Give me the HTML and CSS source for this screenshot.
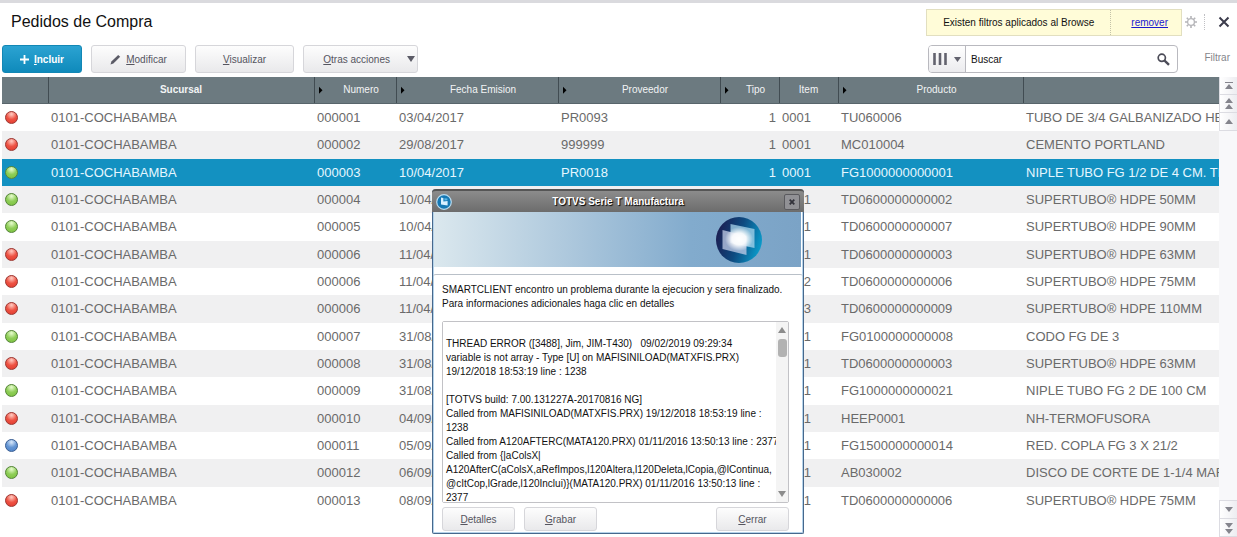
FILE: index.html
```html
<!DOCTYPE html>
<html lang="es">
<head>
    <meta charset="UTF-8">
    <meta name="viewport" content="width=device-width, initial-scale=1.0">
    <title>Pedidos de Compra</title>
    <link rel="stylesheet" href="styles.css">
</head>
<body>

<header class="title-bar">
    <h1>Pedidos de Compra</h1>
    <div class="filter-notice">
        <span class="notice-text">Existen filtros aplicados al Browse</span>
        <a class="notice-link" href="#">remover</a>
    </div>
    <button class="icon-btn gear" aria-label="Configurar">
        <svg width="12" height="12" viewBox="0 0 12 12"><circle cx="6" cy="6" r="3.4" fill="none" stroke="#b4b4b8" stroke-width="1.3"/><path d="M6 0V2M6 10V12M0 6H2M10 6H12M1.8 1.8 3.2 3.2M8.8 8.8 10.2 10.2M10.2 1.8 8.8 3.2M3.2 8.8 1.8 10.2" stroke="#b4b4b8" stroke-width="1.6"/></svg>
    </button>
    <button class="icon-btn close" aria-label="Cerrar ventana">
        <svg width="12" height="12" viewBox="0 0 12 12"><path d="M1.5 1.5 10.5 10.5M10.5 1.5 1.5 10.5" stroke="#3c3c4c" stroke-width="2" fill="none"/></svg>
    </button>
</header>

<div class="toolbar">
    <button class="btn btn-primary">
        <svg width="9" height="9" viewBox="0 0 9 9"><path d="M4.5 0V9M0 4.5H9" stroke="#fff" stroke-width="1.8"/></svg>
        <span><u>I</u>ncluir</span>
    </button>
    <button class="btn btn-edit">
        <svg width="11" height="11" viewBox="0 0 11 11"><path d="M0.5 10.5 1.4 7.6 8.2 0.9 10.2 2.7 3.4 9.4Z" fill="#5b5b66"/></svg>
        <span><u>M</u>odificar</span>
    </button>
    <button class="btn btn-view"><span><u>V</u>isualizar</span></button>
    <button class="btn btn-more">
        <span><u>O</u>tras acciones</span>
        <svg width="8" height="6" viewBox="0 0 8 6"><path d="M0 0H8L4 6Z" fill="#5b5b66"/></svg>
    </button>
    <div class="search">
        <button class="search-mode" aria-label="Columnas">
            <svg width="14" height="12" viewBox="0 0 14 12"><path d="M1.5 0V12M7 0V12M12.5 0V12" stroke="#62626e" stroke-width="2.6"/></svg>
            <svg width="7" height="5" viewBox="0 0 7 5"><path d="M0 0H7L3.5 5Z" fill="#62626e"/></svg>
        </button>
        <input type="text" id="search" aria-label="Buscar" value="Buscar">
        <button class="search-go" aria-label="Ejecutar busqueda">
            <svg width="13" height="13" viewBox="0 0 13 13"><circle cx="4.8" cy="4.8" r="3.6" fill="none" stroke="#4c4c58" stroke-width="1.7"/><path d="M7.6 7.6 12 11.8" stroke="#4c4c58" stroke-width="2.4"/></svg>
        </button>
    </div>
    <a class="filter-link" href="#">Filtrar</a>
</div>

<main class="browse">
    <div class="grid">
        <table>
            <colgroup>
                <col class="c-status"><col class="c-branch"><col class="c-number"><col class="c-date"><col class="c-supplier"><col class="c-type"><col class="c-item"><col class="c-product"><col>
            </colgroup>
            <thead>
                <tr>
                    <th></th>
                    <th class="current">Sucursal</th>
                    <th class="sort">Numero</th>
                    <th class="sort">Fecha Emision</th>
                    <th class="sort">Proveedor</th>
                    <th class="sort">Tipo</th>
                    <th>Item</th>
                    <th class="sort">Producto</th>
                    <th></th>
                </tr>
            </thead>
            <tbody>
                <tr><td><i class="led red"></i></td><td>0101-COCHABAMBA</td><td>000001</td><td>03/04/2017</td><td>PR0093</td><td class="num">1</td><td>0001</td><td>TU060006</td><td>TUBO DE 3/4 GALBANIZADO HEC</td></tr>
                <tr><td><i class="led red"></i></td><td>0101-COCHABAMBA</td><td>000002</td><td>29/08/2017</td><td>999999</td><td class="num">1</td><td>0001</td><td>MC010004</td><td>CEMENTO PORTLAND</td></tr>
                <tr class="selected"><td><i class="led green"></i></td><td>0101-COCHABAMBA</td><td>000003</td><td>10/04/2017</td><td>PR0018</td><td class="num">1</td><td>0001</td><td>FG1000000000001</td><td>NIPLE TUBO FG 1/2 DE 4 CM. TH</td></tr>
                <tr><td><i class="led green"></i></td><td>0101-COCHABAMBA</td><td>000004</td><td>10/04/2017</td><td></td><td class="num"></td><td>0001</td><td>TD0600000000002</td><td>SUPERTUBO® HDPE 50MM</td></tr>
                <tr><td><i class="led green"></i></td><td>0101-COCHABAMBA</td><td>000005</td><td>10/04/2017</td><td></td><td class="num"></td><td>0001</td><td>TD0600000000007</td><td>SUPERTUBO® HDPE 90MM</td></tr>
                <tr><td><i class="led red"></i></td><td>0101-COCHABAMBA</td><td>000006</td><td>11/04/2017</td><td></td><td class="num"></td><td>0001</td><td>TD0600000000003</td><td>SUPERTUBO® HDPE 63MM</td></tr>
                <tr><td><i class="led red"></i></td><td>0101-COCHABAMBA</td><td>000006</td><td>11/04/2017</td><td></td><td class="num"></td><td>0002</td><td>TD0600000000006</td><td>SUPERTUBO® HDPE 75MM</td></tr>
                <tr><td><i class="led red"></i></td><td>0101-COCHABAMBA</td><td>000006</td><td>11/04/2017</td><td></td><td class="num"></td><td>0003</td><td>TD0600000000009</td><td>SUPERTUBO® HDPE 110MM</td></tr>
                <tr><td><i class="led green"></i></td><td>0101-COCHABAMBA</td><td>000007</td><td>31/08/2017</td><td></td><td class="num"></td><td>0001</td><td>FG0100000000008</td><td>CODO FG DE 3</td></tr>
                <tr><td><i class="led red"></i></td><td>0101-COCHABAMBA</td><td>000008</td><td>31/08/2017</td><td></td><td class="num"></td><td>0001</td><td>TD0600000000003</td><td>SUPERTUBO® HDPE 63MM</td></tr>
                <tr><td><i class="led green"></i></td><td>0101-COCHABAMBA</td><td>000009</td><td>31/08/2017</td><td></td><td class="num"></td><td>0001</td><td>FG1000000000021</td><td>NIPLE TUBO FG 2 DE 100 CM</td></tr>
                <tr><td><i class="led red"></i></td><td>0101-COCHABAMBA</td><td>000010</td><td>04/09/2017</td><td></td><td class="num"></td><td>0001</td><td>HEEP0001</td><td>NH-TERMOFUSORA</td></tr>
                <tr><td><i class="led blue"></i></td><td>0101-COCHABAMBA</td><td>000011</td><td>05/09/2017</td><td></td><td class="num"></td><td>0001</td><td>FG1500000000014</td><td>RED. COPLA FG 3 X 21/2</td></tr>
                <tr><td><i class="led green"></i></td><td>0101-COCHABAMBA</td><td>000012</td><td>06/09/2017</td><td></td><td class="num"></td><td>0001</td><td>AB030002</td><td>DISCO DE CORTE DE 1-1/4 MAR</td></tr>
                <tr><td><i class="led red"></i></td><td>0101-COCHABAMBA</td><td>000013</td><td>08/09/2017</td><td></td><td class="num"></td><td>0001</td><td>TD0600000000006</td><td>SUPERTUBO® HDPE 75MM</td></tr>
            </tbody>
        </table>
    </div>
    <nav class="pager" aria-label="Navegar registros">
        <button aria-label="Primero"><svg width="8" height="8" viewBox="0 0 8 8"><path d="M0 0H8V1H0ZM4 2 8 7H0Z" fill="#85858d"/></svg></button>
        <button aria-label="Pagina anterior"><svg width="8" height="12" viewBox="0 0 8 12"><path d="M4 0 8 5H0ZM4 6 8 11H0Z" fill="#85858d"/></svg></button>
        <button aria-label="Anterior"><svg width="8" height="5" viewBox="0 0 8 5"><path d="M4 0 8 5H0Z" fill="#85858d"/></svg></button>
        <span class="track"></span>
        <button aria-label="Siguiente"><svg width="8" height="5" viewBox="0 0 8 5"><path d="M0 0H8L4 5Z" fill="#85858d"/></svg></button>
        <button aria-label="Pagina siguiente"><svg width="8" height="12" viewBox="0 0 8 12"><path d="M0 1H8L4 6ZM0 7H8L4 12Z" fill="#85858d"/></svg></button>
    </nav>
</main>

<section class="window" role="dialog" aria-labelledby="windowTitle">
    <div class="window-title">
        <svg width="16" height="16" viewBox="0 0 16 16">
            <circle cx="8" cy="8" r="7.3" fill="#1578b4" stroke="#b9dcf0" stroke-width="1.2"/>
            <path d="M5 3.6 7.4 4V7.4L11.6 7V11.4L5 10.6Z" fill="#d8f0ff"/>
            <path d="M8.4 4.2 11.4 4.6V6.2L8.4 6.4Z" fill="#5fb8e6"/>
        </svg>
        <h2 id="windowTitle">TOTVS Serie T Manufactura</h2>
        <button class="window-close" aria-label="Cerrar dialogo">
            <svg width="6" height="6" viewBox="0 0 6 6"><path d="M0.7 0.7 5.3 5.3M5.3 0.7 0.7 5.3" stroke="#33333b" stroke-width="1.8"/></svg>
        </button>
    </div>
    <div class="banner">
        <svg width="48" height="48" viewBox="0 0 48 48">
            <defs>
                <linearGradient id="ball" x1="0" y1="0.3" x2="1" y2="0.6">
                    <stop offset="0" stop-color="#1c1c50"/>
                    <stop offset="0.5" stop-color="#0d4a80"/>
                    <stop offset="1" stop-color="#0a9ccb"/>
                </linearGradient>
                <radialGradient id="glow">
                    <stop offset="0" stop-color="#fff"/>
                    <stop offset="0.5" stop-color="#fff" stop-opacity="0.9"/>
                    <stop offset="1" stop-color="#fff" stop-opacity="0"/>
                </radialGradient>
                <clipPath id="panels"><path d="M15.5 8 39.5 13V32L31.5 30.3V39L7.5 33V14L15.5 16Z"/></clipPath>
            </defs>
            <circle cx="24" cy="24" r="23" fill="url(#ball)"/>
            <path d="M15.5 8 39.5 13V32L15.5 27Z" fill="#a9d6ec" fill-opacity="0.75"/>
            <path d="M7.5 14 31.5 20V39L7.5 33Z" fill="#c3cde8" fill-opacity="0.75"/>
            <ellipse cx="24" cy="23" rx="14" ry="12" fill="url(#glow)" clip-path="url(#panels)"/>
        </svg>
    </div>
    <div class="window-body">
        <p>SMARTCLIENT encontro un problema durante la ejecucion y sera finalizado.<br>Para informaciones adicionales haga clic en detalles</p>
        <div class="log">
            <textarea readonly aria-label="Detalles del error">

THREAD ERROR ([3488], Jim, JIM-T430)   09/02/2019 09:29:34
variable is not array - Type [U] on MAFISINILOAD(MATXFIS.PRX)
19/12/2018 18:53:19 line : 1238

[TOTVS build: 7.00.131227A-20170816 NG]
Called from MAFISINILOAD(MATXFIS.PRX) 19/12/2018 18:53:19 line :
1238
Called from A120AFTERC(MATA120.PRX) 01/11/2016 13:50:13 line : 2377
Called from {|aColsX|
A120AfterC(aColsX,aRefImpos,l120Altera,l120Deleta,lCopia,@lContinua,
@cItCop,lGrade,l120Inclui)}(MATA120.PRX) 01/11/2016 13:50:13 line :
2377</textarea>
            <div class="log-scroll">
                <svg width="8" height="6" viewBox="0 0 8 6"><path d="M4 0 8 6H0Z" fill="#8c8c8c"/></svg>
                <span class="thumb"></span>
                <svg width="8" height="6" viewBox="0 0 8 6"><path d="M0 0H8L4 6Z" fill="#8c8c8c"/></svg>
            </div>
        </div>
        <div class="actions">
            <button class="btn"><span><u>D</u>etalles</span></button>
            <button class="btn"><span><u>G</u>rabar</span></button>
            <button class="btn last"><span><u>C</u>errar</span></button>
        </div>
    </div>
</section>

</body>
</html>
```

FILE: styles.css
```css
:root {
    --primary: #1391c1;
    --header: #6c7a80;
    --text: #6a6a6a;
    --stripe: #f0f0f1;
}

* {
    box-sizing: border-box;
}

body {
    margin: 0;
    height: 100vh;
    display: flex;
    flex-direction: column;
    overflow: hidden;
    position: relative;
    border-top: 3px solid #dadade;
    background: #fff;
    color: #111;
    font-family: "Liberation Sans", Arial, sans-serif;
    font-size: 10px;
}

button, input, textarea {
    font: inherit;
    color: inherit;
}

button {
    padding: 0;
    border: none;
    background: none;
    cursor: pointer;
}

svg {
    display: block;
    flex: none;
}

/* Title */
.title-bar {
    display: flex;
    align-items: center;
    height: 42px;
    padding: 0 6px 4px 11px;
}

h1 {
    flex: 1;
    margin: 0;
    font-size: 16px;
    font-weight: normal;
}

.filter-notice {
    display: flex;
    align-items: center;
    height: 27px;
    border: 1px solid #e2dfc0;
    background: #fffcd8;
}

.notice-text {
    padding: 0 16px;
    line-height: 25px;
    border-right: 1px dotted #c4c2a8;
}

.notice-link {
    padding: 0 13px 0 20px;
    color: #1a1ad0;
}

.icon-btn {
    display: flex;
    align-items: center;
    justify-content: center;
    height: 16px;
}

.gear {
    width: 23px;
    padding-right: 4px;
    border-right: 1px dotted #c0c0c4;
}

.close {
    width: 26px;
    padding-left: 12px;
}

/* Toolbar */
.toolbar {
    display: flex;
    height: 32px;
    padding: 0 7px 4px 2px;
}

.btn {
    display: flex;
    align-items: center;
    justify-content: center;
    gap: 5px;
    border: 1px solid #d6d6da;
    border-radius: 3px;
    background: linear-gradient(#fdfdfd, #e9e9eb);
    color: #55555f;
}

.btn-primary {
    width: 80px;
    margin-right: 9px;
    border-color: #1287b5;
    background: linear-gradient(#2ba3d2, #0f8abb);
    color: #fff;
    font-weight: bold;
}

.btn-edit {
    width: 95px;
    margin-right: 9px;
}

.btn-view {
    width: 99px;
    margin-right: 9px;
}

.btn-more {
    width: 115px;
    gap: 17px;
    justify-content: flex-end;
    padding-right: 2px;
}

.search {
    display: flex;
    width: 250px;
    margin-left: auto;
    border: 1px solid #b9b9bf;
    border-radius: 4px;
    overflow: hidden;
}

.search-mode {
    display: flex;
    align-items: center;
    justify-content: center;
    gap: 7px;
    width: 37px;
    border-right: 1px solid #b9b9bf;
    background: linear-gradient(#fff, #ebebee);
}

.search input {
    flex: 1;
    min-width: 0;
    padding: 0 5px;
    border: none;
    outline: none;
}

.search-go {
    padding-right: 7px;
}

.filter-link {
    width: 52px;
    line-height: 26px;
    text-align: right;
    text-decoration: none;
    color: #85858a;
}

/* Browse */
.browse {
    flex: 1;
    display: flex;
    min-height: 0;
    padding-left: 2px;
}

.grid {
    flex: 1;
    min-width: 0;
    overflow: hidden;
    padding-bottom: 23px;
}

table {
    width: 100%;
    height: 100%;
    table-layout: fixed;
    border-collapse: collapse;
}

.c-status { width: 46px; }
.c-branch { width: 266px; }
.c-number { width: 82px; }
.c-date { width: 162px; }
.c-supplier { width: 162px; }
.c-type { width: 59px; }
.c-item { width: 59px; }
.c-product { width: 185px; }

th {
    height: 26px;
    padding: 0 4px;
    border-right: 1px solid #414c52;
    border-bottom: 1px solid #58656b;
    background: var(--header);
    color: #f2f4f5;
    font-weight: normal;
}

th:last-child {
    border-right: none;
}

th.current {
    font-weight: bold;
}

th.sort::before {
    content: "";
    float: left;
    width: 12px;
    height: 8px;
    margin-top: 2px;
    background: #000;
    clip-path: polygon(0 0, 4px 4px, 0 8px);
}

td {
    padding: 0 3px;
    overflow: hidden;
    white-space: nowrap;
    font-size: 13px;
    line-height: 15px;
    color: var(--text);
}

tbody tr:nth-child(even) {
    background: var(--stripe);
}

tbody tr.selected {
    background: var(--primary);
}

tr.selected td {
    color: #e6f7ff;
}

.num {
    text-align: right;
}

.led {
    display: block;
    width: 13px;
    height: 13px;
    border: 1px solid;
    border-radius: 50%;
}

.red {
    border-color: #9c3a35;
    background: radial-gradient(circle at 50% 20%, #ffc2b8 5%, #ee5344 50%, #e0382b);
}

.green {
    border-color: #55843a;
    background: radial-gradient(circle at 50% 20%, #e0f8c4 5%, #8fce58 50%, #79c03c);
}

.blue {
    border-color: #3c5f93;
    background: radial-gradient(circle at 50% 20%, #cfe2f8 5%, #6596d4 50%, #4a80c8);
}

.pager {
    display: flex;
    flex-direction: column;
    width: 18px;
    background: #f8f8fa;
}

.pager button {
    display: flex;
    align-items: center;
    justify-content: center;
    height: 18px;
    border: 1px solid #dcdce2;
    border-width: 0 0 1px 1px;
    background: linear-gradient(90deg, #fff, #ededf1);
}

.track {
    flex: 1;
    border-bottom: 1px solid #dcdce2;
}

/* Error window */
.window {
    position: absolute;
    left: 432px;
    top: 186px;
    width: 372px;
    border: 1px solid #47688c;
    border-top: none;
    border-radius: 4px 4px 2px 2px;
    background: #fff;
    box-shadow: inset 0 0 0 1px #b5d3ea;
}

.window-title {
    display: flex;
    align-items: center;
    height: 23px;
    margin: 0 -1px;
    padding: 0 4px;
    border-top: 2px solid #555;
    border-radius: 4px 4px 0 0;
    background: linear-gradient(#8c8c8c, #6c6c6c);
}

h2 {
    flex: 1;
    margin: 0;
    text-align: center;
    font-size: 10px;
    color: #fff;
    text-shadow: 1px 1px 1px #000;
}

.window-close {
    display: flex;
    align-items: center;
    justify-content: center;
    width: 16px;
    height: 16px;
    border: 1px solid #5a5a5e;
    border-radius: 2px;
    background: #919195;
}

.banner {
    display: flex;
    align-items: center;
    justify-content: flex-end;
    height: 55px;
    margin: 0 2px 7px 1px;
    padding-right: 38px;
    background: linear-gradient(90deg, #dbe8ee, #a9c5db 40%, #82abcd 70%, #7ba3c6);
}

.window-body {
    padding: 8px 14px 2px 9px;
    border-top: 1px solid #b9c0c8;
    border-radius: 3px 3px 0 0;
}

p {
    margin: 0 0 10px;
    line-height: 14px;
    white-space: nowrap;
}

.log {
    display: flex;
    height: 182px;
    margin-bottom: 4px;
    border: 1px solid #c2c2c6;
    border-radius: 2px;
}

.log textarea {
    flex: 1;
    min-width: 0;
    padding: 1px 0 0 3px;
    border: none;
    outline: none;
    resize: none;
    overflow: hidden;
    white-space: pre;
    line-height: 14px;
}

.log-scroll {
    display: flex;
    flex-direction: column;
    align-items: center;
    width: 12px;
    padding: 5px 0;
    background: #f4f4f4;
}

.thumb {
    width: 9px;
    height: 18px;
    margin: 6px 0 auto;
    border-radius: 3px;
    background: #b2b2b2;
}

.actions {
    display: flex;
    gap: 9px;
}

.actions .btn {
    width: 73px;
    height: 24px;
}

.actions .last {
    margin-left: auto;
}
```
